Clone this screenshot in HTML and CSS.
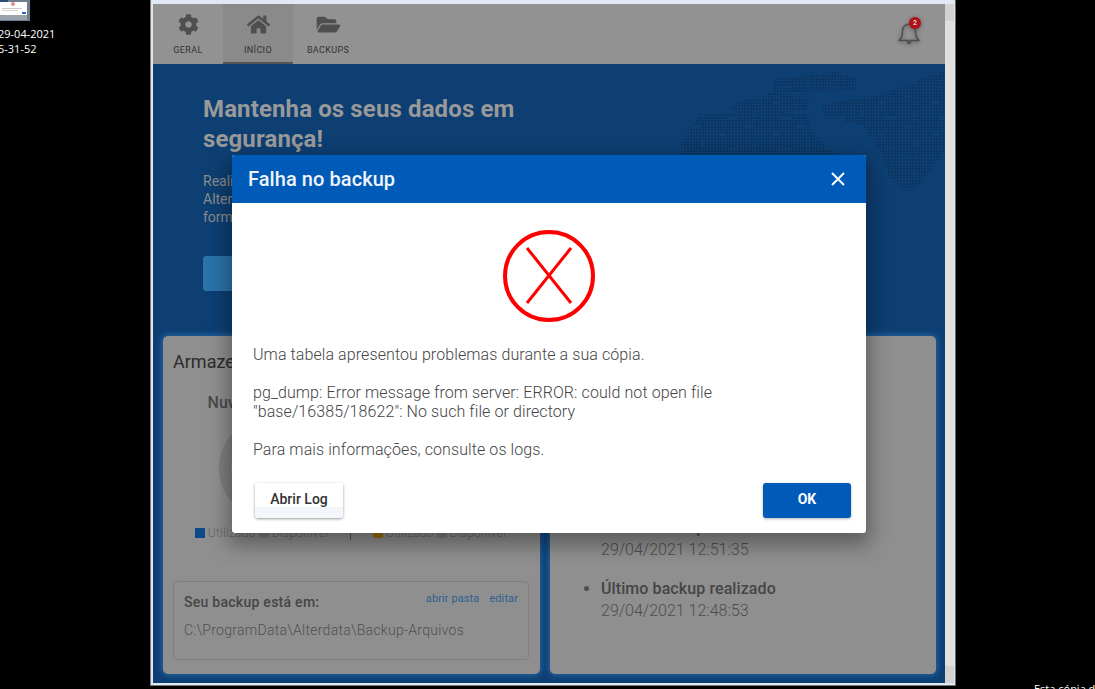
FILE: index.html
```html
<!DOCTYPE html>
<html lang="pt-BR">
<head>
    <meta charset="UTF-8">
    <meta name="viewport" content="width=device-width, initial-scale=1.0">
    <title>Backup</title>
    <link rel="stylesheet" href="styles.css">
</head>
<body>
    <div class="desktop-icon">
        <svg class="thumb" width="30" height="21" viewBox="0 0 30 21">
            <rect width="30" height="21" fill="#6f7f8f"/>
            <rect x="0" y="0" width="8" height="3" fill="#2a4a78"/>
            <rect x="0" y="2" width="27" height="13" fill="#fff"/>
            <circle cx="13" cy="4" r="2" fill="#e88a8a"/>
            <rect x="2" y="8" width="20" height="1" fill="#c8c8c8"/>
            <rect x="2" y="10" width="16" height="1" fill="#d4d4d4"/>
            <rect x="22" y="12" width="4" height="2" fill="#2a66b8"/>
            <rect x="0" y="15" width="27" height="5" fill="#9aa4ae"/>
        </svg>
        <div class="desktop-label">29-04-2021<br>5-31-52</div>
    </div>

    <div class="window">
        <div class="app">
            <div class="toolbar">
                <div class="tab">
                    <svg class="tab-icon" width="21" height="21" viewBox="0 0 512 512"><path d="M487.4 315.7l-42.6-24.6c4.3-23.2 4.3-47 0-70.2l42.6-24.6c4.9-2.8 7.1-8.6 5.5-14-11.1-35.6-30-67.8-54.7-94.6-3.8-4.1-10-5.1-14.8-2.3L380.8 110c-17.9-15.4-38.5-27.3-60.8-35.1V25.8c0-5.6-3.9-10.5-9.4-11.7-36.7-8.2-74.3-7.8-109.2 0-5.5 1.2-9.4 6.1-9.4 11.7V75c-22.2 7.9-42.8 19.8-60.8 35.1L88.7 85.5c-4.9-2.8-11-1.9-14.8 2.3-24.7 26.7-43.6 58.9-54.7 94.6-1.7 5.4.6 11.2 5.5 14L67.3 221c-4.3 23.2-4.3 47 0 70.2l-42.6 24.6c-4.9 2.8-7.1 8.6-5.5 14 11.1 35.6 30 67.8 54.7 94.6 3.8 4.1 10 5.1 14.8 2.3l42.6-24.6c17.9 15.4 38.5 27.3 60.8 35.1v49.2c0 5.6 3.9 10.5 9.4 11.7 36.7 8.2 74.3 7.8 109.2 0 5.5-1.2 9.4-6.1 9.4-11.7v-49.2c22.2-7.9 42.8-19.8 60.8-35.1l42.6 24.6c4.9 2.8 11 1.9 14.8-2.3 24.7-26.7 43.6-58.9 54.7-94.6 1.5-5.5-.7-11.3-5.6-14.1zM256 336c-44.1 0-80-35.9-80-80s35.9-80 80-80 80 35.9 80 80-35.9 80-80 80z"/></svg>
                    <span>GERAL</span>
                </div>
                <div class="tab active">
                    <svg class="tab-icon" width="23" height="21" viewBox="0 0 576 512"><path d="M280.37 148.26L96 300.11V464a16 16 0 0 0 16 16l112.06-.29a16 16 0 0 0 15.92-16V368a16 16 0 0 1 16-16h64a16 16 0 0 1 16 16v95.64a16 16 0 0 0 16 16.05L464 480a16 16 0 0 0 16-16V300L295.67 148.26a12.19 12.19 0 0 0-15.3 0zM571.6 251.47L488 182.56V44.05a12 12 0 0 0-12-12h-56a12 12 0 0 0-12 12v72.61L318.47 43a48 48 0 0 0-61 0L4.34 251.47a12 12 0 0 0-1.6 16.9l25.5 31A12 12 0 0 0 45.15 301l235.22-193.74a12.19 12.19 0 0 1 15.3 0L530.9 301a12 12 0 0 0 16.9-1.6l25.5-31a12 12 0 0 0-1.7-16.93z"/></svg>
                    <span>INÍCIO</span>
                </div>
                <div class="tab">
                    <svg class="tab-icon" width="25" height="21" viewBox="0 0 576 512"><path d="M572.694 292.093L500.27 416.248A63.997 63.997 0 0 1 444.989 448H45.025c-18.523 0-30.064-20.093-20.731-36.093l72.424-124.155A64 64 0 0 1 152 256h399.964c18.523 0 30.064 20.093 20.73 36.093zM152 224h328v-48c0-26.51-21.49-48-48-48H272l-64-64H48C21.49 64 0 85.49 0 112v278.046l69.077-118.418C86.214 242.25 117.989 224 152 224z"/></svg>
                    <span>BACKUPS</span>
                </div>
                <div class="bell">
                    <svg width="26" height="28" viewBox="0 0 26 28">
                        <path class="bell-body" d="M3 21.5c2.4-2 3.6-4.5 3.6-10 0-3.6 2.8-6.3 6.4-6.3s6.4 2.7 6.4 6.3c0 5.5 1.2 8 3.600 10z"/>
                        <path class="bell-clapper" d="M10.500 22.500h5c0 1.500-1.100 2.500-2.500 2.500s-2.500-1-2.500-2.500z"/>
                    </svg>
                    <span class="badge">2</span>
                </div>
            </div>

            <div class="hero">
                <svg class="world-map" width="305" height="196" viewBox="640 64 305 196">
                    <defs>
                        <pattern id="dots" width="3" height="3" patternUnits="userSpaceOnUse">
                            <rect width="2" height="2" fill="#0b3460"/>
                        </pattern>
                        <pattern id="gaps" width="53" height="31" patternUnits="userSpaceOnUse">
                            <rect x="3" y="2" width="9" height="2" fill="#0d3f73"/>
                            <rect x="31" y="9" width="6" height="3" fill="#0d3f73"/>
                            <rect x="12" y="17" width="3" height="6" fill="#0d3f73"/>
                            <rect x="38" y="24" width="11" height="2" fill="#0d3f73"/>
                        </pattern>
                    </defs>
                    <path fill="url(#dots)" d="M773 80L835 72 857 78 855 90 800 92 760 98 775 90z"/>
                    <path fill="url(#dots)" d="M745 100L790 95 810 100 805 110 745 118 730 108z"/>
                    <path fill="url(#dots)" d="M822 104L880 95 945 70V150L920 185 905 192 890 178 880 150 862 125 825 116z"/>
                    <path fill="url(#dots)" d="M680 145L700 113H810L808 125 825 147 840 155H680z"/>
                    <rect x="640" y="64" width="305" height="196" fill="url(#gaps)"/>
                </svg>

                <div class="hero-copy">
                    <h1>Mantenha os seus dados em<br>segurança!</h1>
                    <p>Realize backups dos seus dados.<br>Alterdata mantém tudo protegido de<br>forma simples.</p>
                    <div class="hero-button"></div>
                </div>

                <div class="cards">
                    <div class="card storage">
                        <h2>Armazenamento</h2>
                        <div class="charts">
                            <div class="chart">
                                <strong>Nuvem Backup</strong>
                                <div class="ring"></div>
                                <div class="legend">
                                    <i class="sq blue"></i>Utilizado
                                    <i class="sq grey"></i>Disponível
                                </div>
                            </div>
                            <div class="chart">
                                <strong>Local</strong>
                                <div class="ring"></div>
                                <div class="legend">
                                    <i class="sq orange"></i>Utilizado
                                    <i class="sq grey"></i>Disponível
                                </div>
                            </div>
                        </div>
                        <div class="path-box">
                            <div class="path-head">
                                <strong>Seu backup está em:</strong>
                                <span class="path-links"><a>abrir pasta</a><a>editar</a></span>
                            </div>
                            <div class="path-value">C:\ProgramData\Alterdata\Backup-Arquivos</div>
                        </div>
                    </div>

                    <div class="card history">
                        <ul>
                            <li><strong>Último backup iniciado</strong><br>29/04/2021 12:51:35</li>
                            <li><strong>Último backup realizado</strong><br>29/04/2021 12:48:53</li>
                        </ul>
                    </div>
                </div>
            </div>
        </div>
        <div class="scrollbar">
            <div class="scroll-btn"></div>
            <div class="scroll-btn"></div>
        </div>
    </div>

    <div class="modal">
        <div class="modal-head">
            <span>Falha no backup</span>
            <svg width="16" height="16" viewBox="0 0 16 16"><path class="close-x" d="M2 2L14 14M14 2L2 14"/></svg>
        </div>
        <div class="modal-body">
            <svg class="error-icon" width="92" height="92" viewBox="0 0 92 92">
                <circle cx="46" cy="46" r="44"/>
                <path d="M24 18L68 73M68 18L24 73"/>
            </svg>
            <p class="message">Uma tabela apresentou problemas durante a sua cópia.

pg_dump: Error message from server: ERROR: could not open file
"base/16385/18622": No such file or directory

Para mais informações, consulte os logs.</p>
        </div>
        <div class="modal-foot">
            <button class="btn btn-light">Abrir Log</button>
            <button class="btn btn-primary">OK</button>
        </div>
    </div>

    <div class="watermark">Esta cópia d</div>
</body>
</html>
```

FILE: styles.css
```css
body {
    margin: 0;
    height: 689px;
    background-color: #000;
    font-family: Roboto, Arial, sans-serif;
    position: relative;
    overflow: hidden;
}

/* desktop behind the window */
.desktop-icon {
    position: absolute;
    left: 0;
    top: 0;
}

.thumb {
    display: block;
}

.desktop-label {
    margin: 5px 0 0 -2px;
    color: #fff;
    font-family: "Open Sans", sans-serif;
    font-size: 11px;
    line-height: 15px;
}

.watermark {
    position: absolute;
    left: 1034px;
    top: 681px;
    color: #fff;
    font-family: "Open Sans", sans-serif;
    font-size: 11px;
    line-height: 16px;
    white-space: nowrap;
}

.window {
    position: absolute;
    left: 150px;
    top: 0;
    width: 802px;
    height: 679px;
    padding: 4px 0 2px 2px;
    display: flex;
    background-color: #dfe8f3;
    border-left: 1px solid #777;
    border-right: 1px solid #666;
    border-bottom: 1px solid #777;
}

.app {
    width: 792px;
    display: flex;
    flex-direction: column;
}

.scrollbar {
    width: 9px;
    margin-right: 1px;
    background-color: #e0e0e0;
    display: flex;
    flex-direction: column;
    justify-content: space-between;
}

.scroll-btn {
    height: 17px;
    background-color: #d2d2d2;
}

/* toolbar */
.toolbar {
    height: 60px;
    display: flex;
    background-color: #929292;
    flex-shrink: 0;
}

.tab {
    width: 70px;
    height: 60px;
    box-sizing: border-box;
    padding-top: 10px;
    display: flex;
    flex-direction: column;
    align-items: center;
    color: #333;
    font-size: 9px;
    font-weight: 400;
    letter-spacing: 0.35px;
}

.tab span {
    margin-top: 9px;
    line-height: 12px;
}

.tab-icon {
    fill: #4f4f4f;
}

.tab.active {
    background-color: #8a8a8a;
    border-bottom: 2px solid #555;
}

.bell {
    margin-left: auto;
    margin-right: 23px;
    margin-top: 15px;
    position: relative;
    width: 26px;
    height: 28px;
    filter: drop-shadow(0 1px 2px rgba(0, 0, 0, 0.4));
}

.bell-body {
    fill: none;
    stroke: #4d4d4d;
    stroke-width: 1.5;
    stroke-linejoin: round;
}

.bell-clapper {
    fill: #4d4d4d;
}

.badge {
    position: absolute;
    left: 13px;
    top: -2px;
    width: 12px;
    height: 12px;
    border-radius: 50%;
    background-color: #b30f17;
    color: #ddd;
    font-size: 7px;
    font-weight: 700;
    line-height: 12px;
    text-align: center;
}

/* hero */
.hero {
    flex: 1;
    position: relative;
    box-sizing: border-box;
    padding: 30px 9px 9px 10px;
    display: flex;
    flex-direction: column;
    background-color: #0d3f73;
}

.world-map {
    position: absolute;
    right: 0;
    top: 0;
}

.hero-copy {
    position: relative;
    padding-left: 40px;
}

.hero-copy h1 {
    margin: 0;
    color: #999;
    font-size: 24px;
    font-weight: 700;
    line-height: 30px;
    letter-spacing: 0.12px;
}

.hero-copy p {
    margin: 18px 0 0;
    color: #8c8c8c;
    font-size: 14px;
    line-height: 18px;
}

.hero-button {
    width: 160px;
    height: 35px;
    margin-top: 30px;
    background-color: #2a73ab;
    border-radius: 3px;
}

.cards {
    flex: 1;
    display: flex;
    gap: 10px;
    margin-top: 45px;
    position: relative;
}

.card {
    box-sizing: border-box;
    background-color: #8f8f8f;
    border-radius: 5px;
    box-shadow: 0 0 6px 1px #2a6aa8;
}

.storage {
    width: 377px;
    padding: 14px 11px 14px 10px;
    display: flex;
    flex-direction: column;
}

.storage h2 {
    margin: 0;
    color: #2c2c2c;
    font-size: 18px;
    font-weight: 400;
    line-height: 24px;
}

.charts {
    display: flex;
    margin-top: 18px;
}

.chart {
    width: 177px;
    display: flex;
    flex-direction: column;
    align-items: center;
    color: #4a4a4a;
    font-size: 16px;
    line-height: 22px;
}

.chart strong {
    font-weight: 500;
}

.chart:first-child {
    border-right: 1px solid #555;
}

.ring {
    width: 78px;
    height: 78px;
    margin: 3px 0 0 16px;
    border: 12px solid #7f7f7f;
    border-radius: 50%;
}

.legend {
    margin-top: 7px;
    color: #666;
    font-size: 12px;
    font-weight: 300;
    line-height: 14px;
    letter-spacing: 0.25px;
    white-space: nowrap;
}

.sq {
    display: inline-block;
    width: 10px;
    height: 10px;
    margin-right: 3px;
    vertical-align: -1px;
}

.sq.blue {
    background-color: #0d4a8c;
}

.sq.grey {
    background-color: #7d7d7d;
}

.sq.orange {
    background-color: #a0700f;
}

.path-box {
    height: 79px;
    box-sizing: border-box;
    margin-top: auto;
    padding: 10px 10px 0;
    border: 1px solid #7f7f7f;
    border-radius: 4px;
}

.path-head {
    display: flex;
    justify-content: space-between;
    color: #454545;
    font-size: 14px;
    line-height: 20px;
    letter-spacing: 0.27px;
}

.path-head strong {
    font-weight: 500;
}

.path-links {
    color: #2c5f8f;
    font-size: 11px;
    line-height: 14px;
    letter-spacing: 0.1px;
}

.path-links a {
    margin-left: 10px;
}

.path-value {
    margin-top: 8px;
    color: #4f4f4f;
    font-size: 14px;
    font-weight: 300;
    line-height: 20px;
    letter-spacing: 0.27px;
}

.history {
    width: 386px;
}

.history ul {
    margin: 181px 0 0;
    padding-left: 51px;
    color: #4e4e4e;
    font-size: 16px;
    font-weight: 300;
    line-height: 22px;
}

.history li {
    margin-bottom: 17px;
}

.history strong {
    font-weight: 500;
    color: #454545;
    letter-spacing: 0.09px;
}

/* error dialog */
.modal {
    position: absolute;
    left: 232px;
    top: 155px;
    width: 634px;
    height: 378px;
    display: flex;
    flex-direction: column;
    background-color: #fff;
    border-radius: 3px;
    box-shadow: 0 8px 20px 4px rgba(0, 0, 0, 0.35);
}

.modal-head {
    height: 48px;
    flex-shrink: 0;
    box-sizing: border-box;
    padding: 0 20px 0 16px;
    display: flex;
    justify-content: space-between;
    align-items: center;
    background-color: #005bb8;
    border-radius: 3px 3px 0 0;
    color: #f0f4fa;
    font-size: 20px;
    font-weight: 500;
    letter-spacing: 0.07px;
}

.close-x {
    stroke: #fff;
    stroke-width: 2;
    fill: none;
}

.modal-body {
    padding: 27px 21px 0;
    display: flex;
    flex-direction: column;
}

.error-icon {
    align-self: center;
    fill: none;
    stroke: #f00;
}

.error-icon circle {
    stroke-width: 4;
}

.error-icon path {
    stroke-width: 3;
}

.message {
    margin: 23px 0 0;
    color: #444;
    font-size: 16px;
    font-weight: 300;
    line-height: 19px;
    letter-spacing: 0.09px;
    white-space: pre-line;
}

.modal-foot {
    margin-top: auto;
    padding: 0 15px 15px 23px;
    display: flex;
    justify-content: space-between;
}

.btn {
    width: 88px;
    height: 35px;
    padding: 0 0 3px;
    border: 0;
    border-radius: 3px;
    font-family: Roboto, Arial, sans-serif;
    font-size: 14px;
    font-weight: 500;
}

.btn-light {
    background: linear-gradient(to bottom, #fff 70%, #f3f6fa 70%);
    color: #333;
    box-shadow: 0 1px 3px rgba(0, 0, 0, 0.4);
}

.btn-primary {
    background-color: #005bb8;
    color: #fff;
    font-weight: 700;
    box-shadow: 0 1px 3px rgba(0, 0, 0, 0.3);
}
```
